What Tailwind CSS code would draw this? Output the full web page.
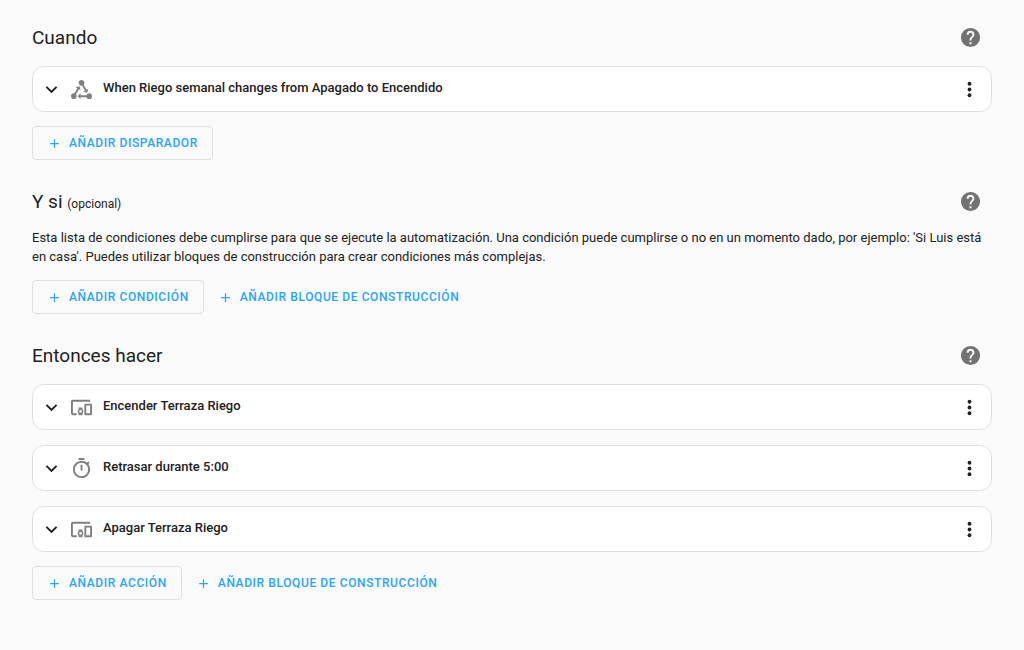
<!DOCTYPE html>
<html lang="es">
  <head>
    <meta charset="UTF-8" />
    <meta name="viewport" content="width=device-width, initial-scale=1.0" />
    <title>Automatización</title>
    <!-- Tailwind CDN -->
    <script src="https://cdn.jsdelivr.net/npm/@tailwindcss/browser@4"></script>
  </head>
  <body
    class="min-h-screen bg-[#fafafa] font-['Roboto',sans-serif] text-[#212121]"
  >
    <!-- Icons -->
    <svg class="hidden" aria-hidden="true">
      <symbol id="chevron" viewBox="0 0 24 24">
        <path d="M7.41,8.58L12,13.17L16.59,8.58L18,10L12,16L6,10L7.41,8.58Z" />
      </symbol>
      <symbol id="dots" viewBox="0 0 24 24">
        <circle cx="12" cy="6" r="2" />
        <circle cx="12" cy="12" r="2" />
        <circle cx="12" cy="18" r="2" />
      </symbol>
      <symbol id="plus" viewBox="0 0 24 24">
        <path d="M19,13H13V19H11V13H5V11H11V5H13V11H19V13Z" />
      </symbol>
      <symbol id="help" viewBox="0 0 24 24">
        <path
          d="M15.07,11.25L14.17,12.17C13.45,12.89 13,13.5 13,15H11V14.5C11,13.39 11.45,12.39 12.17,11.67L13.41,10.41C13.78,10.05 14,9.55 14,9C14,7.89 13.1,7 12,7A2,2 0 0,0 10,9H8A4,4 0 0,1 12,5A4,4 0 0,1 16,9C16,9.88 15.64,10.67 15.07,11.25M13,19H11V17H13M12,2A10,10 0 0,0 2,12A10,10 0 0,0 12,22A10,10 0 0,0 22,12C22,6.47 17.5,2 12,2Z"
        />
      </symbol>
      <symbol id="state" viewBox="0 0 24 24">
        <path
          d="M6.27 17.05A2.991 2.991 0 0 1 4 22C2.34 22 1 20.66 1 19S2.34 16 4 16C4.18 16 4.36 16 4.53 16.05L7.6 10.69L5.86 9.7L9.95 8.58L11.07 12.67L9.33 11.68L6.27 17.05M20 16C18.7 16 17.6 16.84 17.18 18H11V16L8 19L11 22V20H17.18C17.6 21.16 18.7 22 20 22C21.66 22 23 20.66 23 19S21.66 16 20 16M12 8C12.18 8 12.36 8 12.53 7.95L15.6 13.31L13.86 14.3L17.95 15.42L19.07 11.33L17.33 12.32L14.27 6.95C14.72 6.45 15 5.76 15 5C15 3.34 13.66 2 12 2S9 3.34 9 5 10.34 8 12 8Z"
        />
      </symbol>
      <symbol id="devices" viewBox="0 0 24 24">
        <path
          d="M3 6H21V4H3C1.9 4 1 4.9 1 6V18C1 19.1 1.9 20 3 20H7V18H3V6M13 12H9V13.78C8.39 14.33 8 15.11 8 16C8 16.89 8.39 17.67 9 18.22V20H13V18.22C13.61 17.67 14 16.88 14 16S13.61 14.33 13 13.78V12M11 17.5C10.17 17.5 9.5 16.83 9.5 16S10.17 14.5 11 14.5 12.5 15.17 12.5 16 11.83 17.5 11 17.5M22 8H16C15.5 8 15 8.5 15 9V19C15 19.5 15.5 20 16 20H22C22.5 20 23 19.5 23 19V9C23 8.5 22.5 8 22 8M21 18H17V10H21V18Z"
        />
      </symbol>
      <symbol id="timer" viewBox="0 0 24 24">
        <path
          d="M12,20A7,7 0 0,1 5,13A7,7 0 0,1 12,6A7,7 0 0,1 19,13A7,7 0 0,1 12,20M19.03,7.39L20.45,5.97C20,5.46 19.55,5 19.04,4.56L17.62,6C16.07,4.74 14.12,4 12,4A9,9 0 0,0 3,13A9,9 0 0,0 12,22C17,22 21,17.97 21,13C21,10.88 20.26,8.93 19.03,7.39M11,14H13V8H11M15,1H9V3H15V1Z"
        />
      </symbol>
    </svg>

    <main class="flex flex-col gap-7 px-8 pt-6 pb-8">
      <!-- Triggers -->
      <section>
        <div class="flex items-start justify-between pr-[10px]">
          <h2 class="text-[19px] leading-7">Cuando</h2>
          <button class="pt-[2px] text-[#727272]" aria-label="Ayuda">
            <svg class="size-[23px] fill-current"><use href="#help" /></svg>
          </button>
        </div>
        <div class="mt-[14px] flex h-[46px] items-center rounded-xl border border-[#e0e0e0] bg-white pr-[10px] pl-[7px]">
          <button aria-label="Expandir">
            <svg class="size-[23px] fill-current"><use href="#chevron" /></svg>
          </button>
          <svg class="ml-[7px] size-[23px] fill-[#7f7f7f]"><use href="#state" /></svg>
          <h3 class="ml-[10px] flex-1 pb-[3px] text-[13px] leading-5 font-medium">
            When Riego semanal changes from Apagado to Encendido
          </h3>
          <button aria-label="Menú">
            <svg class="size-[23px] fill-current"><use href="#dots" /></svg>
          </button>
        </div>
        <div class="mt-[14px] flex gap-2">
          <button
            class="flex h-[34px] items-center gap-[7px] rounded-sm border border-[#e0e0e0] px-[14px] text-xs font-medium tracking-wider text-[#2ba4f5] uppercase"
          >
            <svg class="size-[15px] fill-current"><use href="#plus" /></svg>
            Añadir disparador
          </button>
        </div>
      </section>

      <!-- Conditions -->
      <section>
        <div class="flex items-start justify-between pr-[10px]">
          <h2 class="text-[19px] leading-7">
            Y si <span class="text-xs">(opcional)</span>
          </h2>
          <button class="pt-[2px] text-[#727272]" aria-label="Ayuda">
            <svg class="size-[23px] fill-current"><use href="#help" /></svg>
          </button>
        </div>
        <p class="mt-3 text-[13px] leading-[19px]">
          Esta lista de condiciones debe cumplirse para que se ejecute la
          automatización. Una condición puede cumplirse o no en un momento dado,
          por ejemplo: 'Si Luis está en casa'. Puedes utilizar bloques de
          construcción para crear condiciones más complejas.
        </p>
        <div class="mt-[14px] flex gap-2">
          <button
            class="flex h-[34px] items-center gap-[7px] rounded-sm border border-[#e0e0e0] px-[14px] text-xs font-medium tracking-wider text-[#2ba4f5] uppercase"
          >
            <svg class="size-[15px] fill-current"><use href="#plus" /></svg>
            Añadir condición
          </button>
          <button
            class="flex h-[34px] items-center gap-[7px] px-[6px] text-xs font-medium tracking-wider text-[#2ba4f5] uppercase"
          >
            <svg class="size-[15px] fill-current"><use href="#plus" /></svg>
            Añadir bloque de construcción
          </button>
        </div>
      </section>

      <!-- Actions -->
      <section>
        <div class="flex items-start justify-between pr-[10px]">
          <h2 class="text-[19px] leading-7">Entonces hacer</h2>
          <button class="pt-[2px] text-[#727272]" aria-label="Ayuda">
            <svg class="size-[23px] fill-current"><use href="#help" /></svg>
          </button>
        </div>
        <div class="mt-[14px] flex flex-col gap-[15px]">
          <div class="flex h-[46px] items-center rounded-xl border border-[#e0e0e0] bg-white pr-[10px] pl-[7px]">
            <button aria-label="Expandir">
              <svg class="size-[23px] fill-current"><use href="#chevron" /></svg>
            </button>
            <svg class="ml-[7px] size-[23px] fill-[#7f7f7f]"><use href="#devices" /></svg>
            <h3 class="ml-[10px] flex-1 pb-[3px] text-[13px] leading-5 font-medium">
              Encender Terraza Riego
            </h3>
            <button aria-label="Menú">
              <svg class="size-[23px] fill-current"><use href="#dots" /></svg>
            </button>
          </div>
          <div class="flex h-[46px] items-center rounded-xl border border-[#e0e0e0] bg-white pr-[10px] pl-[7px]">
            <button aria-label="Expandir">
              <svg class="size-[23px] fill-current"><use href="#chevron" /></svg>
            </button>
            <svg class="ml-[7px] size-[23px] fill-[#7f7f7f]"><use href="#timer" /></svg>
            <h3 class="ml-[10px] flex-1 pb-[3px] text-[13px] leading-5 font-medium">
              Retrasar durante 5:00
            </h3>
            <button aria-label="Menú">
              <svg class="size-[23px] fill-current"><use href="#dots" /></svg>
            </button>
          </div>
          <div class="flex h-[46px] items-center rounded-xl border border-[#e0e0e0] bg-white pr-[10px] pl-[7px]">
            <button aria-label="Expandir">
              <svg class="size-[23px] fill-current"><use href="#chevron" /></svg>
            </button>
            <svg class="ml-[7px] size-[23px] fill-[#7f7f7f]"><use href="#devices" /></svg>
            <h3 class="ml-[10px] flex-1 pb-[3px] text-[13px] leading-5 font-medium">
              Apagar Terraza Riego
            </h3>
            <button aria-label="Menú">
              <svg class="size-[23px] fill-current"><use href="#dots" /></svg>
            </button>
          </div>
        </div>
        <div class="mt-[14px] flex gap-2">
          <button
            class="flex h-[34px] items-center gap-[7px] rounded-sm border border-[#e0e0e0] px-[14px] text-xs font-medium tracking-wider text-[#2ba4f5] uppercase"
          >
            <svg class="size-[15px] fill-current"><use href="#plus" /></svg>
            Añadir acción
          </button>
          <button
            class="flex h-[34px] items-center gap-[7px] px-[6px] text-xs font-medium tracking-wider text-[#2ba4f5] uppercase"
          >
            <svg class="size-[15px] fill-current"><use href="#plus" /></svg>
            Añadir bloque de construcción
          </button>
        </div>
      </section>
    </main>
  </body>
</html>
